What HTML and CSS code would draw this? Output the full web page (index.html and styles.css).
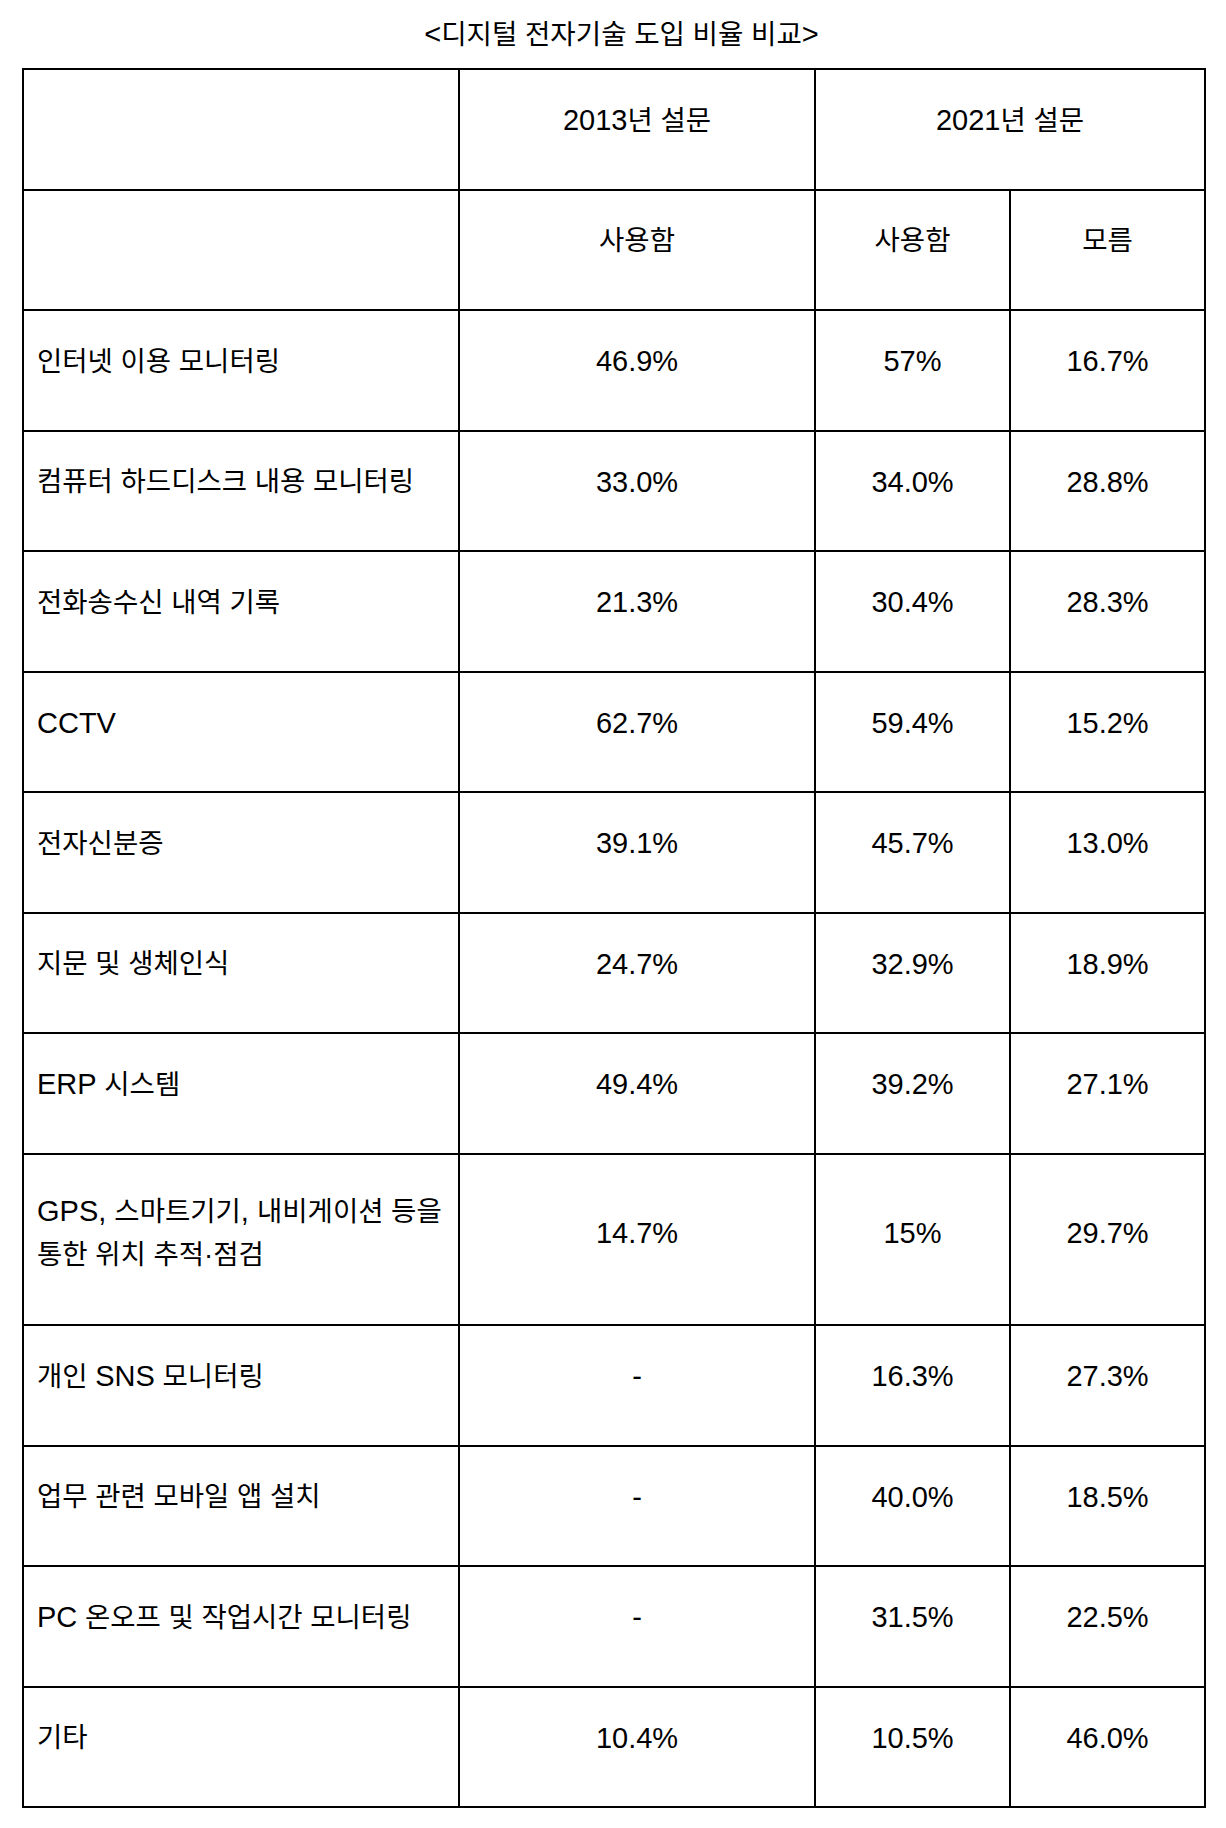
FILE: index.html
```html
<!DOCTYPE html>
<html lang="ko">
<head>
<meta charset="utf-8">
<title>디지털 전자기술 도입 비율 비교</title>
<link rel="stylesheet" href="styles.css">
</head>
<body>
<div class="page">
  <p class="title">&lt;<span class="ko">디지털 전자기술 도입 비율 비교</span>&gt;</p>
  <table class="grid">
    <colgroup>
      <col class="c-label">
      <col class="c-old">
      <col class="c-use">
      <col class="c-unk">
    </colgroup>
    <tbody>
      <tr>
        <td></td>
        <td class="num">2013<span class="ko">년 설문</span></td>
        <td class="num" colspan="2">2021<span class="ko">년 설문</span></td>
      </tr>
      <tr>
        <td></td>
        <td class="num"><span class="ko">사용함</span></td>
        <td class="num"><span class="ko">사용함</span></td>
        <td class="num"><span class="ko">모름</span></td>
      </tr>
      <tr>
        <td><span class="ko">인터넷 이용 모니터링</span></td>
        <td class="num">46.9%</td>
        <td class="num">57%</td>
        <td class="num">16.7%</td>
      </tr>
      <tr>
        <td><span class="ko">컴퓨터 하드디스크 내용 모니터링</span></td>
        <td class="num">33.0%</td>
        <td class="num">34.0%</td>
        <td class="num">28.8%</td>
      </tr>
      <tr>
        <td><span class="ko">전화송수신 내역 기록</span></td>
        <td class="num">21.3%</td>
        <td class="num">30.4%</td>
        <td class="num">28.3%</td>
      </tr>
      <tr>
        <td>CCTV</td>
        <td class="num">62.7%</td>
        <td class="num">59.4%</td>
        <td class="num">15.2%</td>
      </tr>
      <tr>
        <td><span class="ko">전자신분증</span></td>
        <td class="num">39.1%</td>
        <td class="num">45.7%</td>
        <td class="num">13.0%</td>
      </tr>
      <tr>
        <td><span class="ko">지문 및 생체인식</span></td>
        <td class="num">24.7%</td>
        <td class="num">32.9%</td>
        <td class="num">18.9%</td>
      </tr>
      <tr>
        <td>ERP<span class="ko"> 시스템</span></td>
        <td class="num">49.4%</td>
        <td class="num">39.2%</td>
        <td class="num">27.1%</td>
      </tr>
      <tr class="tall">
        <td>GPS, <span class="ko">스마트기기</span>, <span class="ko">내비게이션 등을</span><br><span class="ko">통한 위치 추적·점검</span></td>
        <td class="num">14.7%</td>
        <td class="num">15%</td>
        <td class="num">29.7%</td>
      </tr>
      <tr>
        <td><span class="ko">개인 </span>SNS<span class="ko"> 모니터링</span></td>
        <td class="num">-</td>
        <td class="num">16.3%</td>
        <td class="num">27.3%</td>
      </tr>
      <tr>
        <td><span class="ko">업무 관련 모바일 앱 설치</span></td>
        <td class="num">-</td>
        <td class="num">40.0%</td>
        <td class="num">18.5%</td>
      </tr>
      <tr>
        <td>PC<span class="ko"> 온오프 및 작업시간 모니터링</span></td>
        <td class="num">-</td>
        <td class="num">31.5%</td>
        <td class="num">22.5%</td>
      </tr>
      <tr>
        <td><span class="ko">기타</span></td>
        <td class="num">10.4%</td>
        <td class="num">10.5%</td>
        <td class="num">46.0%</td>
      </tr>
    </tbody>
  </table>
</div>
</body>
</html>
```

FILE: styles.css
```css
body {
  margin: 0;
  background: #fff;
  color: #000;
  font-family: "Liberation Sans", "Noto Sans CJK KR", sans-serif;
}

.page {
  padding: 0 21px 0 22px;
}

.title {
  margin: 0;
  height: 68px;
  box-sizing: border-box;
  padding: 13px 0 0 16px;
  text-align: center;
  font-size: 29px;
  line-height: 42px;
}

.title .ko {
  font-size: 27.6px;
}

.grid {
  border-collapse: collapse;
  table-layout: fixed;
  width: 1183px;
}

.c-label { width: 436px; }
.c-old { width: 356px; }
.c-use { width: 195px; }
.c-unk { width: 195px; }

.grid td {
  border: 2px solid #000;
  height: 120.5px;
  box-sizing: border-box;
  padding: 0 6px 18px 13px;
  font-size: 29px;
  line-height: 42px;
  vertical-align: middle;
  text-align: left;
}

.grid td.num {
  text-align: center;
  padding-left: 4px;
  padding-right: 4px;
}

.grid .ko {
  font-size: 27.5px;
}

.grid tr.tall td {
  height: 171.7px;
  padding-bottom: 12px;
}
```
